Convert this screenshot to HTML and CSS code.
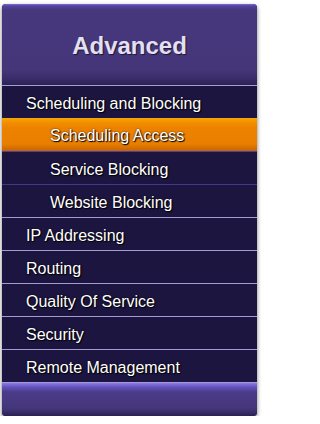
FILE: index.html
```html
<!DOCTYPE html>
<html>
<head>
<meta charset="utf-8">
<link rel="stylesheet" href="styles.css">
</head>
<body>
<div class="panel">
  <div class="panel-head">Advanced</div>
  <ul class="menu">
    <li class="item">Scheduling and Blocking</li>
    <li class="item sub active">Scheduling Access</li>
    <li class="item sub">Service Blocking</li>
    <li class="item sub last-sub">Website Blocking</li>
    <li class="item">IP Addressing</li>
    <li class="item">Routing</li>
    <li class="item">Quality Of Service</li>
    <li class="item">Security</li>
    <li class="item">Remote Management</li>
  </ul>
  <div class="panel-foot"></div>
</div>
</body>
</html>
```

FILE: styles.css
```css
html, body {
  margin: 0;
  padding: 0;
  background: #ffffff;
}
body {
  font-family: "Liberation Sans", Arial, sans-serif;
}
.panel {
  width: 255px;
  margin: 4px 0 0 2px;
  border-radius: 4px;
  box-shadow: 0 2px 4px rgba(0, 0, 0, 0.55);
  overflow: hidden;
  background: #1c1540;
}
.panel-head {
  height: 82px;
  border-bottom: 1px solid #a69dd6;
  display: flex;
  align-items: center;
  justify-content: center;
  font-size: 24px;
  font-weight: bold;
  color: #e2e0f2;
  text-shadow: 1px 1px 1px rgba(0, 0, 0, 0.6);
  background: linear-gradient(to bottom, #7e6bd6 0px, #5443a0 2px, #47387e 6px, #45367a 66px, #3a2d6a 74px, #2a2052 82px);
  box-sizing: border-box;
  padding-top: 3px;
}
.menu {
  list-style: none;
  margin: 0;
  padding: 0;
}
.item {
  height: 32px;
  box-sizing: border-box;
  height: 33px;
  padding-top: 3px;
  border-bottom: 1px solid #a39bd2;
  display: flex;
  align-items: center;
  padding-left: 24px;
  font-size: 16px;
  color: #ffffff;
  text-shadow: 1px 1px 1px #000000, 0 0 2px rgba(0, 0, 0, 0.7);
  background: #1c1540;
}
.item.sub {
  padding-left: 48px;
  border-bottom-color: #42378a;
}
.item.sub.last-sub {
  border-bottom: 1px solid #a39bd2;
}
.item.active {
  margin-top: -1px;
  height: 34px;
  border-bottom-color: #4a3fa6;
  background: linear-gradient(to bottom, #f7a800 0px, #f39000 4px, #ed8200 10px, #e97f00 26px, #c46400 33px);
}
.panel-foot {
  height: 33px;
  background: linear-gradient(to bottom, #8c7aea 0px, #6552bd 4px, #4b3b88 9px, #45367a 25px, #3a2d6a 29px, #2a2052 33px);
}
```
